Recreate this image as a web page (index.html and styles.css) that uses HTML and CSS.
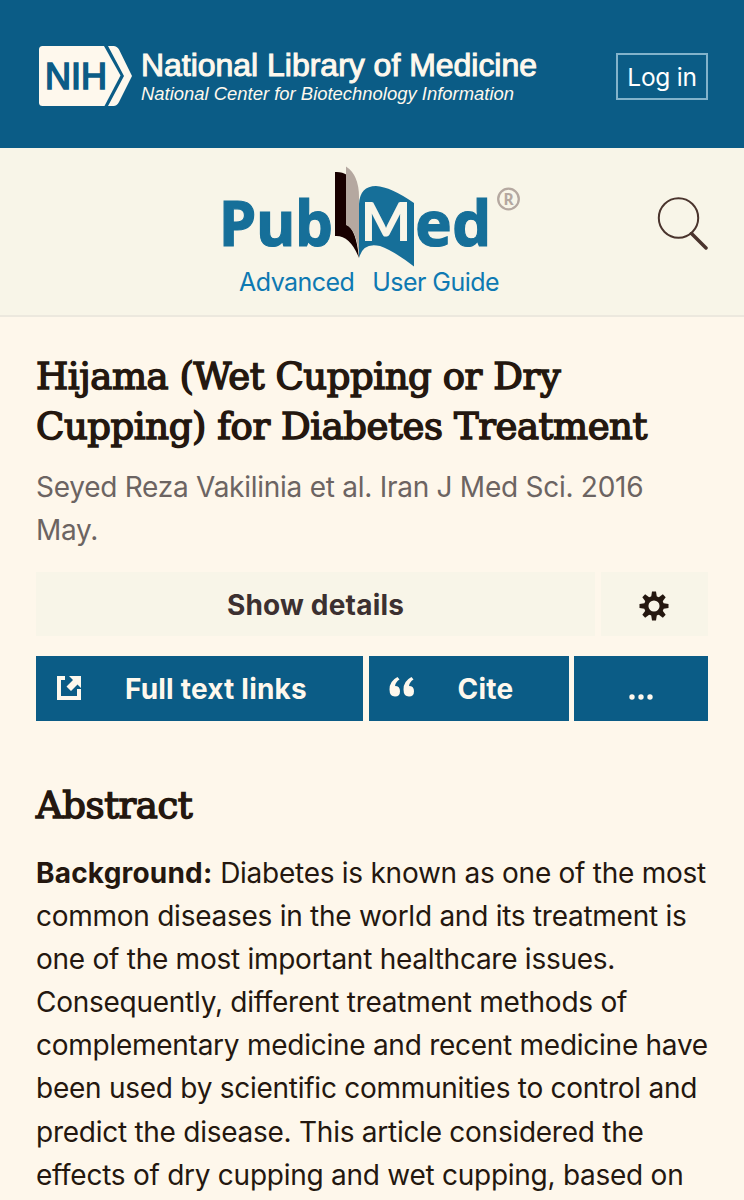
FILE: index.html
```html
<!DOCTYPE html>
<html lang="en">
  <head>
    <meta charset="utf-8">
    <title>Hijama (Wet Cupping or Dry Cupping) for Diabetes Treatment - PubMed</title>
    <link rel="stylesheet" href="styles.css">
  </head>
  <body>
    <header class="ncbi-header">
      <svg class="ncbi-logo" width="504" height="68" viewBox="36 42 504 68" role="img" aria-label="National Library of Medicine">
        <path class="cream" d="M42.500 46H104L120.500 75.500L104.500 106H42.500Q39 106 39 102.500V49.500Q39 46 42.500 46Z"/>
        <path class="cream" d="M108 46H113.500Q117 46 119 49.500L132 76L119 102Q117 106 113.500 106H108L124 76Z"/>
        <text class="nih" x="45" y="89" textLength="62" lengthAdjust="spacingAndGlyphs">NIH</text>
        <text class="nlm" x="141" y="75.500" textLength="396" lengthAdjust="spacingAndGlyphs">National Library of Medicine</text>
        <text class="ncbi" x="141" y="100" textLength="373" lengthAdjust="spacingAndGlyphs">National Center for Biotechnology Information</text>
      </svg>
      <a class="login">Log in</a>
    </header>
    <div class="search-header">
      <div class="brand">
        <svg class="pubmed-logo" width="304" height="106" viewBox="220 164 304 106" role="img" aria-label="PubMed">
          <path class="page-dark" d="M335 172Q342 171.500 347 175V225Q356 229 359 258Q350 235 335 236Z"/>
          <path class="page-gray" d="M346 166.500Q359 175 359 197V256Q357 230 346 225Z"/>
          <path class="blue" d="M359 204Q360 186 376 186Q391 187 414 203V266.500Q394 251 380 246Q363 242 359 258Z"/>
          <text class="word" x="219" y="245.500" textLength="114" lengthAdjust="spacingAndGlyphs">Pub</text>
          <text class="word med" x="361" y="241" textLength="50" lengthAdjust="spacingAndGlyphs">M</text>
          <text class="word" x="415" y="245.500" textLength="76" lengthAdjust="spacingAndGlyphs">ed</text>
          <circle class="reg-ring" cx="508.500" cy="199" r="10.300"/>
          <text class="reg" x="503.500" y="204.500">R</text>
        </svg>
        <nav class="links">
          <a>Advanced</a>
          <a>User Guide</a>
        </nav>
      </div>
      <svg class="search-icon" width="54" height="54" viewBox="656 196 54 54">
        <circle cx="678.500" cy="218" r="19.700"/>
        <path d="M691.500 233.500L706 248"/>
      </svg>
    </div>
    <main class="article">
      <h1 class="title">Hijama (Wet Cupping or Dry<br>Cupping) for Diabetes Treatment</h1>
      <p class="citation">Seyed Reza Vakilinia et al. Iran J Med Sci. 2016<br>May.</p>
      <div class="row details">
        <button class="btn light">Show details</button>
        <button class="btn light gear" aria-label="Settings">
          <svg width="30" height="30" viewBox="-15 -15 30 30">
            <g class="teeth">
              <path id="tooth" d="M-3 -8L-2 -14.500H2L3 -8Z"/>
              <use href="#tooth" transform="rotate(45)"/>
              <use href="#tooth" transform="rotate(90)"/>
              <use href="#tooth" transform="rotate(135)"/>
              <use href="#tooth" transform="rotate(180)"/>
              <use href="#tooth" transform="rotate(225)"/>
              <use href="#tooth" transform="rotate(270)"/>
              <use href="#tooth" transform="rotate(315)"/>
            </g>
            <circle class="gear-ring" r="7.800"/>
          </svg>
        </button>
      </div>
      <div class="row actions">
        <button class="btn blue-btn">
          <svg class="icon" width="26" height="26" viewBox="0 0 26 26">
            <path d="M1 1H9V5H5V21H21V14H25V25H1Z"/>
            <path d="M13 1H25V13L21.500 9.500L15 16L10.500 11.500L17 5Z"/>
          </svg>
          <span>Full text links</span>
        </button>
        <button class="btn blue-btn">
          <svg class="icon" width="26" height="26" viewBox="0 0 26 26">
            <path id="quote" d="M8.500 2L10.500 4.500Q6.500 7 6 11Q11 11 11 16.300Q11 21.500 6 21.500Q.5 21.500 .5 14.500Q.5 6 8.500 2Z"/>
            <use href="#quote" x="14"/>
          </svg>
          <span>Cite</span>
        </button>
        <button class="btn blue-btn more" aria-label="More">
          <svg width="24" height="6" viewBox="0 0 24 6">
            <circle cx="3" cy="3" r="2.700"/>
            <circle cx="12" cy="3" r="2.700"/>
            <circle cx="21" cy="3" r="2.700"/>
          </svg>
        </button>
      </div>
      <h2 class="section-title">Abstract</h2>
      <p class="abstract"><b>Background:</b> Diabetes is known as one of the most<br>common diseases in the world and its treatment is<br>one of the most important healthcare issues.<br>Consequently, different treatment methods of<br>complementary medicine and recent medicine have<br>been used by scientific communities to control and<br>predict the disease. This article considered the<br>effects of dry cupping and wet cupping, based on</p>
    </main>
  </body>
</html>
```
FILE: styles.css
```css
* {
  box-sizing: border-box;
}

body {
  margin: 0;
  height: 1200px;
  overflow: hidden;
  background: #fef7eb;
  color: #24170f;
  font-family: Inter, "Liberation Sans", sans-serif;
}

.ncbi-header {
  display: flex;
  justify-content: space-between;
  align-items: flex-start;
  height: 148px;
  padding: 42px 36px 0;
  background: #0b5c86;
}

.cream {
  fill: #fef8ed;
}

.nih, .nlm, .ncbi {
  font-family: "Liberation Sans", Arial, sans-serif;
}

.nih {
  font-size: 37px;
  fill: #0b5c86;
  stroke: #0b5c86;
  stroke-width: 1.7px;
}

.nlm {
  font-size: 30.500px;
  fill: #fef8ed;
  stroke: #fef8ed;
  stroke-width: 1px;
}

.ncbi {
  font-size: 19px;
  font-style: italic;
  fill: #fef8ed;
}

.login {
  width: 92px;
  height: 47px;
  margin-top: 11px;
  border: 2px solid #83b3cb;
  color: #fff;
  font-size: 24.500px;
  line-height: 44px;
  letter-spacing: -.25px;
  text-align: center;
  white-space: nowrap;
}

.search-header {
  display: grid;
  grid-template-columns: 1fr 304px 1fr;
  height: 169px;
  padding: 16px 34px 0;
  background: #f8f5e8;
  border-bottom: 2px solid #ece8de;
}

.brand {
  grid-column: 2;
}

.pubmed-logo {
  display: block;
}

.page-dark {
  fill: #180000;
}

.page-gray {
  fill: #b5a8a0;
}

.blue {
  fill: #166f99;
}

.word {
  font-family: "Noto Sans", "Open Sans", sans-serif;
  font-weight: 700;
  font-size: 63px;
  fill: #166f99;
  stroke: #166f99;
  stroke-width: 1.2px;
}

.med {
  font-family: Lato, sans-serif;
  font-weight: 900;
  font-size: 54px;
  fill: #f8f5e8;
  stroke: none;
}

.reg-ring {
  fill: none;
  stroke: #b5a8a0;
  stroke-width: 2.3px;
}

.reg {
  font-family: "Noto Sans", sans-serif;
  font-size: 15.500px;
  font-weight: 700;
  fill: #b5a8a0;
}

.links {
  display: flex;
  justify-content: center;
  gap: 18px;
  margin-left: -6px;
  color: #0e79b2;
  font-size: 25px;
  line-height: 30px;
  letter-spacing: -.55px;
  white-space: nowrap;
}

.links a {
  margin-top: -3px;
}

.search-icon {
  justify-self: end;
  margin-top: 32px;
  fill: none;
  stroke: #4a342d;
  stroke-width: 2px;
}

.search-icon path {
  stroke-width: 3.5px;
  stroke-linecap: round;
}

.article {
  padding: 35px 36px 0;
}

.title, .section-title {
  margin: 0;
  font-family: "DejaVu Serif", serif;
  font-weight: 400;
  font-size: 37px;
  line-height: 50px;
  letter-spacing: -.42px;
  white-space: nowrap;
  -webkit-text-stroke: 1.5px #24170f;
}

.citation {
  margin: 14px 0 20px;
  color: #6c6462;
  font-size: 28px;
  line-height: 43px;
  letter-spacing: -.26px;
  white-space: nowrap;
}

.row {
  display: grid;
  gap: 6px;
}

.details {
  grid-template-columns: 559px 107px;
  margin-bottom: 20px;
}

.actions {
  grid-template-columns: 327px 200px 134px;
  gap: 5.500px;
}

.btn {
  display: flex;
  align-items: center;
  justify-content: center;
  height: 64px;
  padding: 2px 0 0;
  border: 0;
  font-family: inherit;
  font-size: 28px;
  font-weight: 700;
  letter-spacing: .2px;
  white-space: nowrap;
}

.light {
  background: #f8f5e8;
  color: #3c3030;
}

.gear {
  padding: 3px 2px 0 0;
}

.teeth {
  fill: #24170f;
}

.gear-ring {
  fill: #f8f5e8;
  stroke: #24170f;
  stroke-width: 4.500px;
}

.blue-btn {
  justify-content: flex-start;
  height: 65px;
  padding: 1px 0 0 20px;
  background: #0b5c86;
  color: #fef8ed;
  fill: #fef8ed;
}

.actions .icon {
  margin: -2px 43px 0 0;
}

.more {
  justify-content: center;
  padding: 16px 0 0;
}

.section-title {
  margin-top: 60px;
}

.abstract {
  margin: 21px 0 0;
  font-size: 28px;
  line-height: 43.100px;
  letter-spacing: -.26px;
  white-space: nowrap;
}

.abstract b {
  font-weight: 700;
  letter-spacing: .2px;
}
```
